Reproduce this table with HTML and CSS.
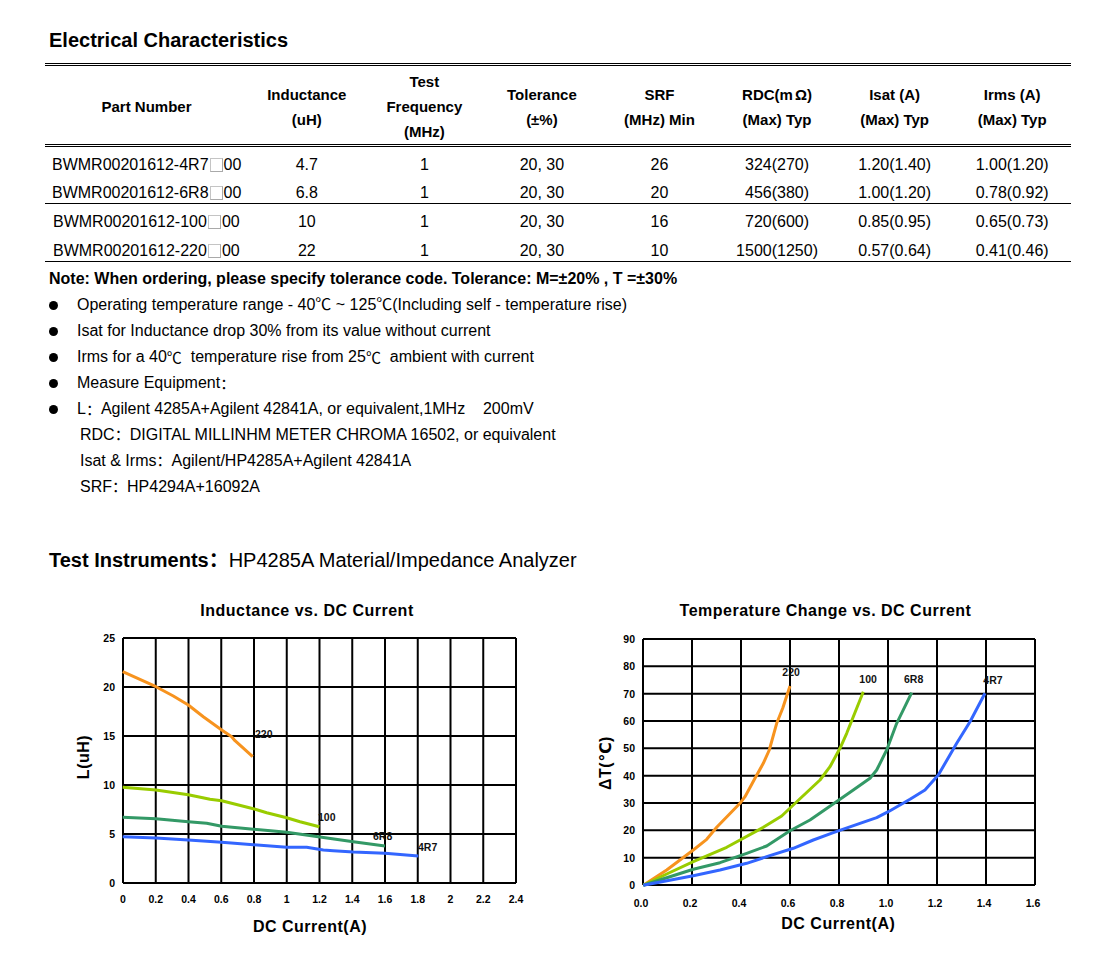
FILE: index.html
```html
<!DOCTYPE html>
<html lang="en">
<head>
<meta charset="utf-8">
<title>Electrical Characteristics</title>
<link rel="stylesheet" href="styles.css">
</head>
<body>
<main class="page">
  <h1 class="title">Electrical Characteristics</h1>
  <table class="spec">
    <colgroup><col class="c-part"><col><col><col><col><col><col><col></colgroup>
    <thead>
      <tr>
        <th>Part Number</th>
        <th>Inductance<br>(uH)</th>
        <th>Test<br>Frequency<br>(MHz)</th>
        <th>Tolerance<br>(±%)</th>
        <th>SRF<br>(MHz) Min</th>
        <th>RDC(m<span class="ohm">Ω</span>)<br>(Max) Typ</th>
        <th>Isat (A)<br>(Max) Typ</th>
        <th>Irms (A)<br>(Max) Typ</th>
      </tr>
    </thead>
    <tbody>
      <tr><td class="pn">BWMR00201612-4R7<span class="box"></span>00</td><td>4.7</td><td>1</td><td>20, 30</td><td>26</td><td>324(270)</td><td>1.20(1.40)</td><td>1.00(1.20)</td></tr>
      <tr class="group-end"><td class="pn">BWMR00201612-6R8<span class="box"></span>00</td><td>6.8</td><td>1</td><td>20, 30</td><td>20</td><td>456(380)</td><td>1.00(1.20)</td><td>0.78(0.92)</td></tr>
      <tr><td class="pn pn2">BWMR00201612-100<span class="box"></span>00</td><td>10</td><td>1</td><td>20, 30</td><td>16</td><td>720(600)</td><td>0.85(0.95)</td><td>0.65(0.73)</td></tr>
      <tr class="group-end last"><td class="pn pn2">BWMR00201612-220<span class="box"></span>00</td><td>22</td><td>1</td><td>20, 30</td><td>10</td><td>1500(1250)</td><td>0.57(0.64)</td><td>0.41(0.46)</td></tr>
    </tbody>
  </table>

  <section class="notes">
    <p class="note">Note: When ordering, please specify tolerance code. Tolerance: M=±20% , T =±30%</p>
    <ul class="bullets">
      <li>Operating temperature range - 40℃ ~ 125℃(Including self - temperature rise)</li>
      <li>Isat for Inductance drop 30% from its value without current</li>
      <li>Irms for a 40<span class="cjk">℃</span>&nbsp; temperature rise from 25<span class="cjk">℃</span>&nbsp; ambient with current</li>
      <li>Measure Equipment<span class="cjk">：</span></li>
      <li>L<span class="cjk">：</span>Agilent 4285A+Agilent 42841A, or equivalent,1MHz&nbsp;&nbsp;&nbsp; 200mV</li>
    </ul>
    <p class="sub">RDC<span class="cjk">：</span>DIGITAL MILLINHM METER CHROMA 16502, or equivalent</p>
    <p class="sub">Isat &amp; Irms<span class="cjk">：</span>Agilent/HP4285A+Agilent 42841A</p>
    <p class="sub">SRF<span class="cjk">：</span>HP4294A+16092A</p>
  </section>

  <h2 class="instr"><b>Test Instruments<span class="cjk">：</span></b>HP4285A Material/Impedance Analyzer</h2>

  <div class="charts">
    <svg class="chart chart-l" width="500" height="360" viewBox="0 0 500 360">
      <text class="ctitle" x="267" y="26" text-anchor="middle">Inductance vs. DC Current</text>
      <path class="grid" d="M83 48V293M115.75 48V293M148.5 48V293M181.25 48V293M214 48V293M246.75 48V293M279.5 48V293M312.25 48V293M345 48V293M377.75 48V293M410.5 48V293M443.25 48V293M476 48V293M83 48H476M83 97H476M83 146H476M83 195H476M83 244H476M83 293H476"/>
      <g class="tick" text-anchor="end">
        <text x="75" y="52">25</text><text x="75" y="101">20</text><text x="75" y="150">15</text>
        <text x="75" y="199">10</text><text x="75" y="248">5</text><text x="75" y="297">0</text>
      </g>
      <g class="tick" text-anchor="middle">
        <text x="83" y="313">0</text><text x="115.75" y="313">0.2</text><text x="148.5" y="313">0.4</text>
        <text x="181.25" y="313">0.6</text><text x="214" y="313">0.8</text><text x="246.75" y="313">1</text>
        <text x="279.5" y="313">1.2</text><text x="312.25" y="313">1.4</text><text x="345" y="313">1.6</text>
        <text x="377.75" y="313">1.8</text><text x="410.5" y="313">2</text><text x="443.25" y="313">2.2</text>
        <text x="476" y="313">2.4</text>
      </g>
      <polyline class="ln c-or" points="82.7,81.7 116,96.7 133.3,106 148.3,115 163.3,126.7 181.7,140 191.7,146.7 195,150.7 212.7,166.7"/>
      <polyline class="ln c-lg" points="82.7,197.3 116,200 148.3,204.7 170,209.3 181.7,210.7 213.3,218.7 226.7,222.7 246.7,227.7 260,231.7 279.3,236.7"/>
      <polyline class="ln c-gr" points="82.7,227.3 116,228.7 148.3,231.7 166.7,233.3 181.7,236.3 213.3,239.3 233.3,241 246.7,242.3 280,247 313.3,251.7 345,256"/>
      <polyline class="ln c-bl" points="82.7,246.7 116,248 148.3,250 181.7,252.3 213.3,254.7 246.7,257.3 266.7,257.3 283.3,260 293.3,260.7 313.3,262 345,263.3 378.3,266"/>
      <g class="lbl">
        <text x="215" y="148">220</text><text x="278" y="231">100</text>
        <text x="333" y="250">6R8</text><text x="378" y="261">4R7</text>
      </g>
      <text class="atitle" x="270" y="341.5" text-anchor="middle">DC Current(A)</text>
      <text class="atitle" x="0" y="0" text-anchor="middle" transform="translate(48.5 167) rotate(-90)">L(uH)</text>
    </svg>

    <svg class="chart chart-r" width="480" height="360" viewBox="0 0 480 360">
      <text class="ctitle" x="245.5" y="26" text-anchor="middle">Temperature Change vs. DC Current</text>
      <path class="grid" d="M63 49V295M112 49V295M161 49V295M210 49V295M259 49V295M308 49V295M357 49V295M406 49V295M455 49V295M63 49H455M63 76.33H455M63 103.67H455M63 131H455M63 158.33H455M63 185.67H455M63 213H455M63 240.33H455M63 267.67H455M63 295H455"/>
      <g class="tick" text-anchor="end">
        <text x="55" y="53">90</text><text x="55" y="80.3">80</text><text x="55" y="107.7">70</text>
        <text x="55" y="135">60</text><text x="55" y="162.3">50</text><text x="55" y="189.7">40</text>
        <text x="55" y="217">30</text><text x="55" y="244.3">20</text><text x="55" y="271.7">10</text>
        <text x="55" y="299">0</text>
      </g>
      <g class="tick" text-anchor="middle">
        <text x="61" y="316.5">0.0</text><text x="110" y="316.5">0.2</text><text x="159" y="316.5">0.4</text>
        <text x="208" y="316.5">0.6</text><text x="257" y="316.5">0.8</text><text x="306" y="316.5">1.0</text>
        <text x="355" y="316.5">1.2</text><text x="404" y="316.5">1.4</text><text x="453" y="316.5">1.6</text>
      </g>
      <polyline class="ln c-or" points="63.3,295.3 86.7,280 113.3,260 126.7,249.3 136.7,237.3 160,213.3 165,206.7 175,188.3 183.3,173.3 189.3,160 196.7,133.3 202.7,118.3 210,96"/>
      <polyline class="ln c-lg" points="63.3,295.3 86.7,284 113.3,271.7 146.7,257.3 183.3,237.3 201.7,226 213.3,215 240,190 250,176.7 260,158.3 266.7,143.3 273.3,126.7 283.3,101.7"/>
      <polyline class="ln c-gr" points="63.3,295.3 113.3,279.3 140,272.7 166.7,263.3 186.7,256 210,240.7 230,230 260,209.3 273.3,200 290,188.3 296.7,180 306.7,160 316.7,133.3 331.7,102.7"/>
      <polyline class="ln c-bl" points="63.3,295.3 113.3,285.7 140,280 166.7,273.3 186.7,266.7 213.3,258.3 233.3,250 253.3,242.7 280,233.3 296.7,227.7 308.3,221.7 330,209.3 345,200 358.3,185 376.7,153.3 390,131.7 405,103.3"/>
      <g class="lbl">
        <text x="202.3" y="86">220</text><text x="279.3" y="92.7">100</text>
        <text x="324" y="92.7">6R8</text><text x="403.3" y="94">4R7</text>
      </g>
      <text class="atitle" x="258.3" y="339.3" text-anchor="middle">DC Current(A)</text>
      <text class="atitle" x="0" y="0" text-anchor="middle" transform="translate(31 173) rotate(-90)">ΔT(℃)</text>
    </svg>
  </div>
</main>
</body>
</html>
```
FILE: styles.css
```css
html, body {
  margin: 0;
  padding: 0;
  background: #fff;
}
body {
  font-family: "Liberation Sans", Arial, "Noto Sans CJK SC", sans-serif;
  color: #000;
}
.page {
  width: 1114px;
  height: 976px;
  box-sizing: border-box;
  padding: 28px 0 0 45px;
}
.title {
  margin: 0 0 11px 4px;
  font-size: 20px;
  line-height: 24px;
  font-weight: bold;
}
.spec {
  width: 1026px;
  table-layout: fixed;
  border-collapse: separate;
  border-spacing: 0;
}
.c-part { width: 203px; }
.spec th {
  font-size: 15px;
  line-height: 25px;
  font-weight: bold;
  padding: 3px 0 0;
  text-align: center;
  vertical-align: middle;
  border-top: 3px double #000;
  border-bottom: 3px double #000;
}
.ohm { margin-left: 2px; }
.spec td {
  font-size: 16px;
  line-height: 20px;
  padding: 8px 0 0;
  text-align: center;
  vertical-align: middle;
  white-space: nowrap;
}
.spec tr.last td { padding-top: 9px; }
.spec td.pn {
  text-align: left;
  padding-left: 7px;
}
.spec td.pn2 { padding-left: 8px; }
.spec tr.group-end td { border-bottom: 1px solid #000; }
.box {
  display: inline-block;
  width: 11px;
  height: 12px;
  border: 1px solid #a9a9a9;
  border-top-color: #c4c4c4;
  border-left-color: #c4c4c4;
  vertical-align: -2px;
  margin: 0 1px 0 1px;
}
.cjk {
  font-family: "Noto Sans CJK SC", sans-serif;
  font-size: 15px;
  line-height: 10px;
}
.notes {
  margin-top: 4px;
  padding-left: 4px;
  font-size: 16px;
  line-height: 26px;
}
.notes p { margin: 0; height: 26px; }
.note { font-weight: bold; }
.bullets {
  list-style: none;
  margin: 0;
  padding: 0;
}
.bullets li {
  display: flex;
  align-items: center;
  height: 26px;
  margin-left: -4px;
}
.bullets li::before {
  content: "";
  flex: none;
  width: 9px;
  height: 9px;
  border-radius: 50%;
  background: #000;
  margin: 0 19.5px 0 3.5px;
}
.notes .sub { padding-left: 31px; }
.instr {
  margin: 48px 0 18px 4px;
  height: 24px;
  font-size: 20px;
  line-height: 24px;
  font-weight: normal;
}
.instr b { font-weight: bold; }
.instr .cjk { font-size: 20px; line-height: 10px; }
.charts {
  display: flex;
  gap: 40px;
  margin-left: -5px;
}
.chart { display: block; font-family: "Liberation Sans", Arial, "DejaVu Sans", sans-serif; }
.ctitle {
  font-size: 16px;
  font-weight: bold;
  letter-spacing: 0.5px;
  fill: #000;
}
.atitle {
  font-size: 16px;
  font-weight: bold;
  letter-spacing: 0.5px;
  fill: #000;
}
.grid {
  fill: none;
  stroke: #000;
  stroke-width: 2;
}
.tick text {
  font-size: 10.5px;
  font-weight: bold;
  fill: #000;
}
.lbl text {
  font-size: 10.5px;
  font-weight: bold;
  fill: #111;
}
.ln {
  fill: none;
  stroke-width: 3;
  stroke-linejoin: round;
  stroke-linecap: butt;
}
.c-or { stroke: #f7931e; }
.c-lg { stroke: #99cc00; }
.c-gr { stroke: #339966; }
.c-bl { stroke: #3366ff; }
```
